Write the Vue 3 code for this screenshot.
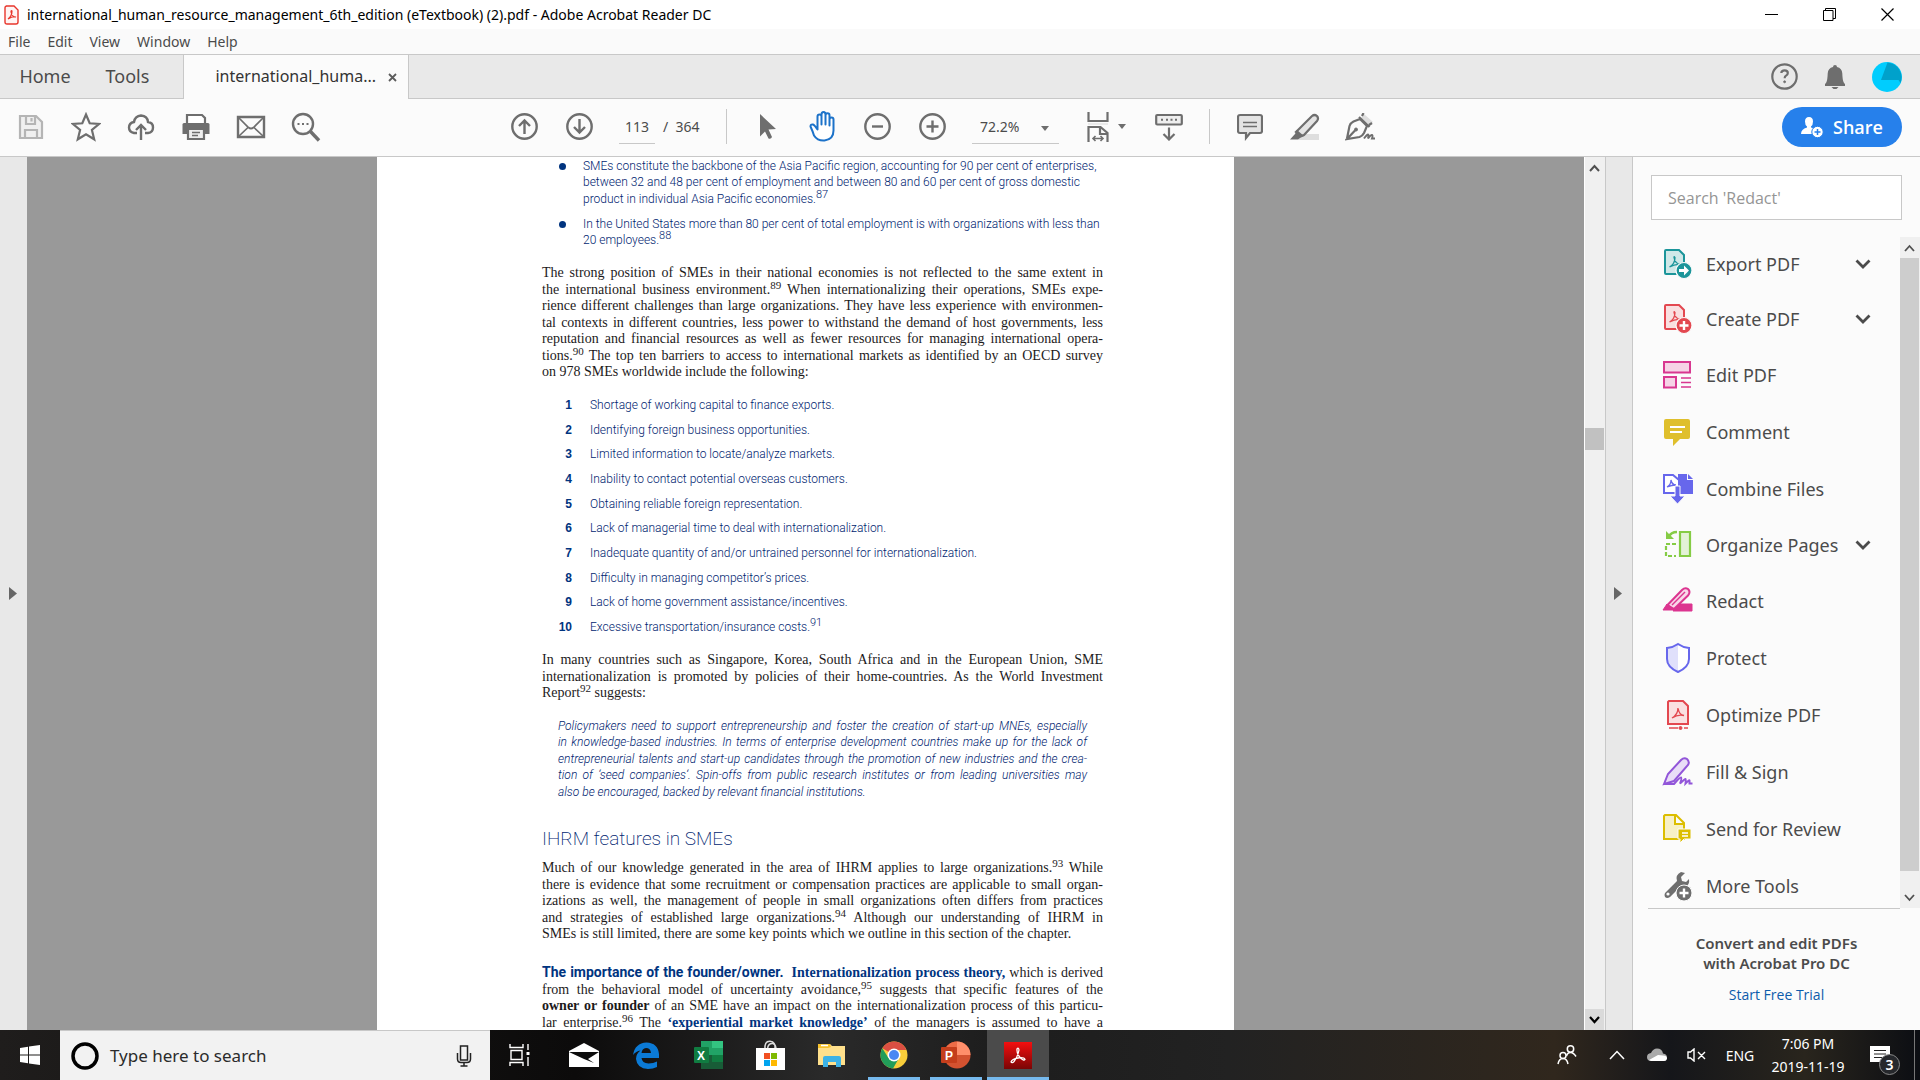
<script setup>
import { ref } from 'vue'

const page = ref('113')
const zoom = ref('72.2%')
const query = ref('')
const menus = ['File', 'Edit', 'View', 'Window', 'Help']
const tools = [
  { id: 'export', label: 'Export PDF', more: true },
  { id: 'create', label: 'Create PDF', more: true },
  { id: 'edit', label: 'Edit PDF' },
  { id: 'comment', label: 'Comment' },
  { id: 'combine', label: 'Combine Files' },
  { id: 'organize', label: 'Organize Pages', more: true },
  { id: 'redact', label: 'Redact' },
  { id: 'protect', label: 'Protect' },
  { id: 'optimize', label: 'Optimize PDF' },
  { id: 'sign', label: 'Fill & Sign' },
  { id: 'review', label: 'Send for Review' },
  { id: 'more', label: 'More Tools' }
]
const barriers = [
  'Shortage of working capital to finance exports.',
  'Identifying foreign business opportunities.',
  'Limited information to locate/analyze markets.',
  'Inability to contact potential overseas customers.',
  'Obtaining reliable foreign representation.',
  'Lack of managerial time to deal with internationalization.',
  'Inadequate quantity of and/or untrained personnel for internationalization.',
  'Difficulty in managing competitor’s prices.',
  'Lack of home government assistance/incentives.',
  'Excessive transportation/insurance costs.'
]
</script>

<template>
  <div class="screen">
    <header class="titlebar">
      <svg class="appicon" width="16" height="20" viewBox="0 0 16 20"><path d="M2 1h8l4 4v12q0 2-2 2H3q-2 0-2-2V3q0-2 2-2z" fill="#fff4f3" stroke="#e8362c" stroke-width="1.4" /><path d="M4 14q4-3 4-8q-1-1-1 1q1 5 5 5q-3-1-8 2z" fill="none" stroke="#e8362c" stroke-width="1.2" /></svg>
      <h1>international_human_resource_management_6th_edition (eTextbook) (2).pdf - Adobe Acrobat Reader DC</h1>
      <div class="winbtns">
        <button aria-label="Minimize"><svg width="13" height="13" viewBox="0 0 13 13"><path d="M0 6.500h13" stroke="#000" /></svg></button>
        <button aria-label="Restore"><svg width="13" height="13" viewBox="0 0 13 13" fill="none" stroke="#000"><path d="M.5 2.500h9.500v10H.5zM2.500 2.500v-2h10v10H10" /></svg></button>
        <button aria-label="Close"><svg width="13" height="13" viewBox="0 0 13 13"><path d="M.5.5l12 12M12.500.5l-12 12" stroke="#000" stroke-width="1.200" /></svg></button>
      </div>
    </header>

    <nav class="menubar">
      <button v-for="m in menus" :key="m">{{ m }}</button>
    </nav>

    <div class="tabs">
      <button class="tab">Home</button>
      <button class="tab">Tools</button>
      <div class="tab-active">
        <button class="tab-name">international_huma...</button>
        <button class="tab-close" aria-label="Close tab"><svg width="9" height="9" viewBox="0 0 9 9"><path d="M1 1l7 7M8 1l-7 7" stroke="#5c5c5c" stroke-width="1.800" /></svg></button>
      </div>
      <div class="account">
        <button aria-label="Help"><svg width="27" height="27" viewBox="0 0 27 27" fill="none" stroke="#6e6e6e"><circle cx="13.500" cy="13.500" r="12.200" stroke-width="2.200" /><path d="M10.300 10q.2-2.600 3.300-2.600 3.200 0 3.200 2.600 0 1.600-1.700 2.600-1.400.8-1.400 2.300v.4" stroke-width="2.200" /><circle cx="13.600" cy="18.800" r="1" fill="#6e6e6e" stroke-width=".8" /></svg></button>
        <button aria-label="Notifications"><svg width="22" height="26" viewBox="0 0 22 26" fill="#6e6e6e"><path d="M11 1q2 0 2 2q5 1 5.300 6.500q.2 6 1.200 8.500q.7 1.500 1.500 2v2H1v-2q.8-.5 1.500-2q1-2.500 1.200-8.500Q4 4 9 3q0-2 2-2zM7.500 23h7l-2 2h-3z" /></svg></button>
        <button aria-label="Account"><svg width="30" height="30" viewBox="0 0 30 30"><circle cx="15" cy="15" r="15" fill="#00cdfe" /><path d="M15.500.5A15 15 0 0 1 28.500 21l-2-3H9z" fill="#00a1cb" /></svg></button>
      </div>
    </div>

    <div class="toolbar">
      <div class="group">
        <button class="tb" aria-label="Save"><svg width="26" height="26" viewBox="0 0 26 26" fill="none" stroke="#b5b5b5" stroke-width="2.200"><path d="M2 2h16l6 6v16H2z" fill="#f0f0f0" /><path d="M8 2v8h9V2M13.500 4v3.500M7 24v-8h12v8" /></svg></button>
        <button class="tb" aria-label="Star"><svg width="30" height="30" viewBox="0 0 30 30"><path d="M15 2.500l3.700 8.800 9.300.7-7.100 6 2.300 9.300-8.200-5-8.200 5L9.100 18 2 12l9.300-.7z" fill="none" stroke="#6e6e6e" stroke-width="2.200" /></svg></button>
        <button class="tb" aria-label="Upload"><svg width="28" height="28" viewBox="0 0 28 28" fill="none" stroke="#6e6e6e" stroke-width="2.400"><path d="M10 20H7q-5-1-5-5.500T7 9q1-6 7-6.500Q20.500 3 21 9q5 .5 5 5.500T21 20h-3M14 27V12M9 17l5-5 5 5" /></svg></button>
        <button class="tb" aria-label="Print"><svg width="28" height="28" viewBox="0 0 28 28"><path d="M5 10V2h15l3 3v5" fill="#fff" stroke="#6e6e6e" stroke-width="2.200" /><path d="M2 10h24q1.500 0 1.500 1.500V21H.5v-9.500Q.5 10 2 10z" fill="#6e6e6e" /><path d="M6 16h16v10H6z" fill="#eee" stroke="#6e6e6e" stroke-width="2.200" /><path d="M10 19.500h8M10 22.500h6" stroke="#6e6e6e" stroke-width="1.300" /></svg></button>
        <button class="tb" aria-label="Email"><svg width="30" height="24" viewBox="0 0 30 24" fill="none" stroke="#6e6e6e"><path d="M2 2h26v20H2z" stroke-width="2.400" /><path d="M3 3l9.500 9.500q2.500 2 5 0L27 3M3 21l9-8.500M27 21l-9-8.500" stroke-width="1.700" /></svg></button>
        <button class="tb" aria-label="Find"><svg width="30" height="30" viewBox="0 0 30 30" fill="none" stroke="#6e6e6e"><circle cx="12" cy="12" r="10" stroke-width="2.400" /><path d="M19.500 19.500l8.500 9" stroke-width="3.400" /><path d="M6.500 12h2M11 12h2M15.500 12h2" stroke-width="2" /></svg></button>
      </div>
      <span class="sp-left"></span>
      <div class="group">
        <button class="tb" aria-label="Previous page"><svg width="27" height="27" viewBox="0 0 27 27" fill="none" stroke="#6e6e6e" stroke-width="2.400"><circle cx="13.500" cy="13.500" r="12.200" /><path d="M13.500 21V8M8 13l5.500-5.500L19 13" /></svg></button>
        <button class="tb" aria-label="Next page"><svg width="27" height="27" viewBox="0 0 27 27" fill="none" stroke="#6e6e6e" stroke-width="2.400"><circle cx="13.500" cy="13.500" r="12.200" /><path d="M13.500 6v13M8 14l5.500 5.500L19 14" /></svg></button>
        <input class="pageno" v-model="page" aria-label="Page number">
        <span class="total">/&nbsp; 364</span>
        <span class="divider"></span>
        <button class="tb" aria-label="Select"><svg width="18" height="28" viewBox="0 0 18 28"><path d="M1 1l16 15-7.500.6L13 24q-1 2.500-3.500 1.500L6 18.500 1 23.500z" fill="#6e6e6e" /></svg></button>
        <button class="tb" aria-label="Pan"><svg width="30" height="31" viewBox="0 0 30 31"><path d="M8.500 18V6q0-2 2-2t2 2v8V4q0-2.500 2-2.500t2 2.500v10V5q0-2.300 2-2.300t2 2.300v10V9q0-2 2-2t2 2v11q0 9-9 10-7 .500-10.500-5Q4 21.500 1.500 16q0-2.500 2.500-2 1.500.500 4.500 5z" transform="translate(1 -.5)" fill="#fff" stroke="#1c72c9" stroke-width="2" stroke-linejoin="round" /></svg></button>
        <button class="tb" aria-label="Zoom out"><svg width="27" height="27" viewBox="0 0 27 27" fill="none" stroke="#6e6e6e" stroke-width="2.400"><circle cx="13.500" cy="13.500" r="12.200" /><path d="M8 13.500h11" /></svg></button>
        <button class="tb" aria-label="Zoom in"><svg width="27" height="27" viewBox="0 0 27 27" fill="none" stroke="#6e6e6e" stroke-width="2.400"><circle cx="13.500" cy="13.500" r="12.200" /><path d="M7.500 13.500h12M13.500 7.500v12" /></svg></button>
        <span class="zoombox">
          <select v-model="zoom" aria-label="Zoom level"><option>72.2%</option><option>100%</option></select>
          <svg class="caret" width="8" height="5" viewBox="0 0 8 5"><path d="M0 0h8L4 5z" fill="#6e6e6e" /></svg>
        </span>
        <button class="fit" aria-label="Fit width"><svg width="22" height="30" viewBox="0 0 22 30" fill="none" stroke="#6e6e6e" stroke-width="2.200"><path d="M1.500 0v9h19V0" /><path d="M1 12h20" stroke="#e4e4e4" stroke-width="1.500" /><path d="M1.500 30V15h12l7 6v9M13 15v7h7" /><path d="M6 26.500h10M8.500 24L6 26.500 8.500 29M13.500 24l2.500 2.500-2.500 2.500" stroke-width="1.600" /></svg><svg width="8" height="5" viewBox="0 0 8 5"><path d="M0 0h8L4 5z" fill="#6e6e6e" /></svg></button>
        <button class="tb" aria-label="Toolbar dock"><svg width="28" height="28" viewBox="0 0 28 28" fill="none" stroke="#6e6e6e" stroke-width="2.200"><rect x="1.200" y="2" width="25.600" height="9.500" rx="1" fill="#eee" /><path d="M6 6.700h2M11 6.700h2M15.500 6.700h2M20 6.700h2" stroke-width="2" /><path d="M14 14.500V26M8.500 21l5.500 5.500 5.500-5.500" /></svg></button>
        <span class="divider"></span>
        <button class="tb" aria-label="Comment"><svg width="26" height="28" viewBox="0 0 26 28"><path d="M3 2h20q2 0 2 2v14q0 2-2 2H13l-4 5v-5H3q-2 0-2-2V4q0-2 2-2z" fill="#e4e4e4" stroke="#6e6e6e" stroke-width="2.200" /><path d="M6 9.500h14M6 13.500h14" stroke="#6e6e6e" stroke-width="1.500" /></svg></button>
        <button class="tb" aria-label="Highlight"><svg width="30" height="28" viewBox="0 0 30 28"><path d="M11 21h18v6H8z" fill="#dedede" /><path d="M8 17L22 3q2.500-2 5 0 2 2.500 0 5L14 22l-3 1-5-4z" fill="#e4e4e4" stroke="#6e6e6e" stroke-width="2.200" /><path d="M7 17l7 6-4 2-5-4zM5 21l5 4-2 1.500H0z" fill="#6e6e6e" /></svg></button>
        <button class="tb" aria-label="Sign"><svg width="30" height="28" viewBox="0 0 30 28" fill="none" stroke="#6e6e6e"><path d="M16 5l3-4 9 8-4 3z" fill="#dedede" stroke="none" /><path d="M2 25.500L4.500 13q1-3 4-4.500L15 6l7 7-3 7q-1.500 3-4.500 4L2 26l8-8.500M14 4l10.500 10M17 3l1.500-3M24 12l3-2" stroke-width="2.200" /><circle cx="11" cy="16.500" r="1.500" fill="#6e6e6e" /><path d="M19 25.500q3-4 4-4t0 4q3-4 4-3.500t0 3.500h3" stroke-width="2" /></svg></button>
      </div>
      <span class="sp-right"></span>
      <button class="share"><svg width="23" height="22" viewBox="0 0 23 22"><path d="M8 1q4 0 4 4.500Q12 9 10 10.500v1q4 1 4.500 2.500L12 18H0q0-5 6-6.500v-1Q4 9 4 5.500 4 1 8 1z" fill="#fff" /><circle cx="16.500" cy="16" r="5.700" fill="#fff" stroke="#2680eb" /><path d="M13.500 16h6M16.500 13v6" stroke="#2680eb" stroke-width="1.500" /></svg>Share</button>
    </div>

    <main class="work">
      <button class="strip left" aria-label="Open navigation pane"><svg width="8" height="13" viewBox="0 0 8 13"><path d="M0 0l8 6.500L0 13z" fill="#666" /></svg></button>
      <section class="canvas">
        <article class="page">
          <ul class="bullets">
            <li><span class="ln">SMEs constitute the backbone of the Asia Pacific region, accounting for 90 per cent of enterprises,</span><span class="ln">between 32 and 48 per cent of employment and between 80 and 60 per cent of gross domestic</span><span class="ln">product in individual Asia Pacific economies.<sup>87</sup></span></li>
            <li><span class="ln">In the United States more than 80 per cent of total employment is with organizations with less than</span><span class="ln">20 employees.<sup>88</sup></span></li>
          </ul>
          <p class="body first">
            <span class="ln">The strong position of SMEs in their national economies is not reflected to the same extent in</span>
            <span class="ln">the international business environment.<sup>89</sup> When internationalizing their operations, SMEs expe-</span>
            <span class="ln">rience different challenges than large organizations. They have less experience with environmen-</span>
            <span class="ln">tal contexts in different countries, less power to withstand the demand of host governments, less</span>
            <span class="ln">reputation and financial resources as well as fewer resources for managing international opera-</span>
            <span class="ln">tions.<sup>90</sup> The top ten barriers to access to international markets as identified by an OECD survey</span>
            <span class="ln end">on 978 SMEs worldwide include the following:</span>
          </p>
          <ol class="barriers">
            <li v-for="(b, i) in barriers" :key="b"><b>{{ i + 1 }}</b><span>{{ b }}<sup v-if="i === 9">91</sup></span></li>
          </ol>
          <p class="body many">
            <span class="ln">In many countries such as Singapore, Korea, South Africa and in the European Union, SME</span>
            <span class="ln">internationalization is promoted by policies of their home-countries. As the World Investment</span>
            <span class="ln end">Report<sup>92</sup> suggests:</span>
          </p>
          <blockquote>
            <span class="ln">Policymakers need to support entrepreneurship and foster the creation of start-up MNEs, especially</span>
            <span class="ln">in knowledge-based industries. In terms of enterprise development countries make up for the lack of</span>
            <span class="ln">entrepreneurial talents and start-up candidates through the promotion of new industries and the crea-</span>
            <span class="ln">tion of ‘seed companies‘. Spin-offs from public research institutes or from leading universities may</span>
            <span class="ln end">also be encouraged, backed by relevant financial institutions.</span>
          </blockquote>
          <h2>IHRM features in SMEs</h2>
          <p class="body">
            <span class="ln">Much of our knowledge generated in the area of IHRM applies to large organizations.<sup>93</sup> While</span>
            <span class="ln">there is evidence that some recruitment or compensation practices are applicable to small organ-</span>
            <span class="ln">izations as well, the management of people in small organizations often differs from practices</span>
            <span class="ln">and strategies of established large organizations.<sup>94</sup> Although our understanding of IHRM in</span>
            <span class="ln end">SMEs is still limited, there are some key points which we outline in this section of the chapter.</span>
          </p>
          <p class="body founder">
            <span class="ln"><b class="runin">The importance of the founder/owner.</b>&nbsp; <b class="term">Internationalization process theory,</b> which is derived</span>
            <span class="ln">from the behavioral model of uncertainty avoidance,<sup>95</sup> suggests that specific features of the</span>
            <span class="ln"><b>owner or founder</b> of an SME have an impact on the internationalization process of this particu-</span>
            <span class="ln">lar enterprise.<sup>96</sup> The <b class="term">‘experiential market knowledge’</b> of the managers is assumed to have a</span>
          </p>
        </article>
      </section>
      <div class="scroll">
        <button class="sb" aria-label="Scroll up"><svg width="11" height="8" viewBox="0 0 11 8"><path d="M1 7l4.500-5L10 7" fill="none" stroke="#505050" stroke-width="2" /></svg></button>
        <span class="thumb"></span>
        <button class="sb down" aria-label="Scroll down"><svg width="11" height="8" viewBox="0 0 11 8"><path d="M1 1l4.500 5L10 1" fill="none" stroke="#000" stroke-width="2.200" /></svg></button>
      </div>
      <button class="strip right" aria-label="Collapse tools pane"><svg width="8" height="13" viewBox="0 0 8 13"><path d="M0 0l8 6.500L0 13z" fill="#666" /></svg></button>

      <aside class="panel">
        <input class="search" v-model="query" placeholder="Search 'Redact'" aria-label="Search tools">
        <div class="toolwrap">
          <div class="toollist">
            <button v-for="t in tools" :key="t.id" class="tool" :class="{ more: t.more }">
              <svg width="32" height="32" viewBox="0 0 32 32" fill="none">
                <g v-if="t.id === 'export' || t.id === 'create'" :stroke="t.id === 'export' ? '#1b959a' : '#e34850'">
                  <path d="M4 2h13l5 5v19H4q-1 0-1-1V3q0-1 1-1z" :fill="t.id === 'export' ? '#cfe8e8' : '#f9dfe0'" stroke-width="2" />
                  <path d="M7.500 19q5.500-3 5.500-9.500-1-1.500-1 0 1 6.500 7 7-5.500-1-11.500 2.500z" stroke-width="1.300" />
                  <circle cx="22" cy="22.500" r="8" :fill="t.id === 'export' ? '#1b959a' : '#e34850'" stroke="#fbfbfb" stroke-width="1.200" />
                  <path v-if="t.id === 'export'" d="M17 21h5v-3.500l5 5-5 5V24h-5z" fill="#fff" stroke="none" />
                  <path v-else d="M17.500 22.500h9M22 18v9" stroke="#fff" stroke-width="2.400" />
                </g>
                <g v-else-if="t.id === 'edit'" stroke="#d83790" stroke-width="2"><path d="M2 3h26v10.500H2zM2 18h12v10.500H2z" fill="#f6d3e6" /><path d="M19 19h10M19 23.500h10M19 28h10" stroke-width="1.500" /></g>
                <g v-else-if="t.id === 'comment'"><path d="M4 3h22q2 0 2 2v16q0 2-2 2h-8l-7 7v-7H4q-2 0-2-2V5q0-2 2-2z" fill="#dfbf2c" /><path d="M8 11h15M8 16h12" stroke="#fff" stroke-width="2" /></g>
                <g v-else-if="t.id === 'combine'"><path d="M16 1h9v6h6v14H16z" fill="#6767ec" /><path d="M26 1l5 5h-5z" fill="#6767ec" /><path d="M2 2h9l6 5v13H2z" fill="#fff" stroke="#6767ec" stroke-width="2" /><path d="M5 14q4-2 4-7 1 5 5 5-4 0-9 2z" stroke="#6767ec" stroke-width="1.300" /><path d="M13 13h5v10h5l-7.500 8L8 23h5z" fill="#6767ec" stroke="#fbfbfb" /></g>
                <g v-else-if="t.id === 'organize'" stroke="#85cc45" stroke-width="2.200"><path d="M18 3h10v24H18z" fill="#e3f2d6" /><path d="M14 15H4v12h10" stroke-dasharray="4 2" /><path d="M15 3q-6 0-8.500 5" stroke-width="2.600" /><path d="M4 2v8h8z" fill="#85cc45" stroke="none" /></g>
                <g v-else-if="t.id === 'redact'" stroke="#dc3590"><path d="M17 19h13v7H11z" fill="#dc3590" /><path d="M5.500 20L20 5q3-3 6-1 3 3 0 6.500L12 24z" fill="#f9d7e9" stroke-width="2" /><path d="M10 20L23 7" stroke-width="1.500" /><path d="M5 19l7 6H1z" fill="#dc3590" /></g>
                <g v-else-if="t.id === 'protect'"><path d="M16 2Q11 5.500 5 6v11q0 8 11 13 11-5 11-13V6q-6-.5-11-4z" fill="#fff" /><path d="M16 2Q11 5.500 5 6v11q0 8 11 13z" fill="#e0e0fb" /><path d="M16 2Q11 5.500 5 6v11q0 8 11 13 11-5 11-13V6q-6-.5-11-4z" stroke="#6767ec" stroke-width="2" /></g>
                <g v-else-if="t.id === 'optimize'" stroke="#e34850"><path d="M7 2h14l5 5v18H6V3z" fill="#fae0e1" stroke-width="2" /><path d="M10 19q6-3.500 6-10 1 7 6 7.500-6-1.500-12 2.500z" stroke-width="1.400" /><path d="M7 29h9M22 29h4" stroke-width="1.500" /><circle cx="18.500" cy="29" r="1.500" fill="#e34850" /></g>
                <g v-else-if="t.id === 'sign'" stroke="#9256d9" stroke-width="2"><path d="M2 28L6 18 19 4q3-3 6-1 3 3 1 6L12 25z" fill="#e9ddf7" /><path d="M2 28h10q6-7 7-6.500t-1 6q5-5 5.500-4.500t0 4.500q4-4 4-3t0 3h3" /></g>
                <g v-else-if="t.id === 'review'" stroke="#dcbe00" stroke-width="2"><path d="M3 2h11l8 8v16H2V3zM13 2v9h9" fill="#f7f0c6" /><path d="M17 16h12v10h-7l-4 4v-4h-2V16z" fill="#dcbe00" stroke="#fbfbfb" stroke-width="1" /><path d="M20 20h6M20 23h6" stroke="#fff" stroke-width="1.300" /></g>
                <g v-else><path d="M3 23L15 11Q13 5 19 2l4 1-4 4 1 4 4 1 3-3q1 6-4 8-3 1-5 0L8 27q-3 2-5 0-1-2 0-4z" fill="#6e6e6e" /><circle cx="6" cy="24" r="1.600" fill="#fbfbfb" /><circle cx="22" cy="23" r="8" fill="#6e6e6e" stroke="#fbfbfb" /><path d="M17.500 23h9M22 18.500v9" stroke="#fff" stroke-width="2.400" /></g>
              </svg>
              <span>{{ t.label }}</span>
              <svg v-if="t.more" class="chev" width="16" height="10" viewBox="0 0 16 10"><path d="M1.500 1.500L8 8l6.500-6.500" fill="none" stroke="#4b4b4b" stroke-width="2.800" /></svg>
            </button>
          </div>
          <div class="toolscroll">
            <button class="sb" aria-label="Scroll tools up"><svg width="11" height="8" viewBox="0 0 11 8"><path d="M1 7l4.500-5L10 7" fill="none" stroke="#505050" stroke-width="1.800" /></svg></button>
            <span class="toolthumb"></span>
            <button class="sb" aria-label="Scroll tools down"><svg width="11" height="8" viewBox="0 0 11 8"><path d="M1 1l4.500 5L10 1" fill="none" stroke="#505050" stroke-width="1.800" /></svg></button>
          </div>
        </div>
        <div class="promo">
          <strong>Convert and edit PDFs<br>with Acrobat Pro DC</strong>
          <a href="#">Start Free Trial</a>
        </div>
      </aside>
    </main>

    <footer class="taskbar">
      <button class="start" aria-label="Start"><svg width="20" height="20" viewBox="0 0 20 20" fill="#fff"><path d="M0 3l8-1.200v7.700H0zM9 1.600L20 0v9.500H9zM0 10.500h8v7.700L0 17zM9 10.500h11V20L9 18.400z" /></svg></button>
      <button class="cortana"><svg width="30" height="30" viewBox="0 0 30 30"><circle cx="15" cy="15" r="12" fill="none" stroke="#000" stroke-width="3.500" /></svg><span>Type here to search</span><svg width="16" height="22" viewBox="0 0 16 22" fill="none" stroke="#222" stroke-width="1.500"><rect x="4.500" y="1" width="7" height="14" /><path d="M1.500 8v6q0 3.500 3.500 3.500h6q3.500 0 3.500-3.500V8M8 18v3M4.500 21h7" /></svg></button>
      <div class="apps">
        <button class="app view" aria-label="Task View"><svg width="22" height="22" viewBox="0 0 22 22" fill="none" stroke="#fff" stroke-width="1.400"><path d="M1 0v3.500h13V0M1 22v-3.500h13V22M2 6.500h11v9H2zM19 0v6M19 13v9" /><path d="M17.500 8h3v3h-3z" fill="#fff" stroke="none" /></svg></button>
        <button class="app" aria-label="Mail"><svg width="30" height="26" viewBox="0 0 30 26"><path d="M0 9L15 1l15 8v16H0z" fill="#fff" /><path d="M0 10h30L19 17l6 4-10-4z" fill="#0c0c0c" /></svg></button>
        <button class="app" aria-label="Edge"><svg width="26" height="27" viewBox="0 0 26 27"><path d="M0 13Q2 1 13.500.5 25 1 26 12v4H8.500q.5 5 7 5.500 5 0 8.500-2v5.500Q20 27 15 27 4 26.500 3 17q0-5.500 4.500-8.500Q3 9 0 13zM8.500 11H18q-.500-5-5-5-4 .5-4.500 5z" fill="#0b7ad6" /></svg></button>
        <button class="app" aria-label="Excel"><svg width="29" height="28" viewBox="0 0 29 28"><path d="M7 0h22v28H7z" fill="#185c37" /><path d="M7 0h11v14H7z" fill="#21a366" /><path d="M18 0h11v7H18z" fill="#33c481" /><path d="M18 7h11v7H18z" fill="#21a366" /><path d="M18 14h11v7H18z" fill="#107c41" /><rect y="6" width="15" height="16" rx="1" fill="#107c41" /><text x="3" y="18.500" font-size="12" font-weight="700" fill="#fff">X</text></svg></button>
        <button class="app" aria-label="Store"><svg width="30" height="30" viewBox="0 0 30 30"><path d="M10 10Q9 1 15 1.200T20 10M12.500 9Q13 3 18 3.500q3 1 3 6" fill="none" stroke="#ddd" stroke-width="1.500" /><path d="M1 8h29v22H1z" fill="#fff" /><path d="M9 13h6v6H9z" fill="#f25022" /><path d="M16 13h6v6h-6z" fill="#7fba00" /><path d="M9 20h6v6H9z" fill="#00a4ef" /><path d="M16 20h6v6h-6z" fill="#ffb900" /></svg></button>
        <button class="app" aria-label="File Explorer"><svg width="28" height="24" viewBox="0 0 28 24"><path d="M0 1h12l2 2h13v19H0z" fill="#ffe08c" /><path d="M0 1h12l1 3-3 1H0z" fill="#f6c12c" /><path d="M3 2.500h7" stroke="#fff" stroke-width="1.500" /><path d="M5 24V15q0-2 2-2h14q2 0 2 2v9h-5v-5h-8v5z" fill="#3db2e6" /></svg></button>
        <button class="app run" aria-label="Chrome"><svg width="28" height="28" viewBox="0 0 28 28"><circle cx="14" cy="14" r="13.500" fill="#f8cd3a" /><path d="M14 14L2.300 7.200A13.500 13.500 0 0 1 25.700 7.200L26 9H14z" fill="#db4f42" /><path d="M2.300 7.200A13.500 13.500 0 0 0 13 27.500L19 17 8.500 17z" fill="#229d59" /><circle cx="14" cy="14" r="6.500" fill="#fff" /><circle cx="14" cy="14" r="5" fill="#4a88f3" /></svg></button>
        <button class="app run" aria-label="PowerPoint"><svg width="30" height="28" viewBox="0 0 30 28"><circle cx="16" cy="14" r="13.500" fill="#d35230" /><path d="M16 .5A13.500 13.500 0 0 1 29.500 14H16z" fill="#ff8f6b" /><path d="M16 .5A13.500 13.500 0 0 0 2.500 14H16z" fill="#ed6c47" /><rect y="6" width="16" height="16" rx="1" fill="#c43e1c" /><text x="4" y="18.500" font-size="12" font-weight="700" fill="#fff">P</text></svg></button>
        <button class="app active" aria-label="Acrobat Reader"><svg width="28" height="27" viewBox="0 0 28 27"><defs><linearGradient id="ar" x2="0" y2="1"><stop stop-color="#f40f0f" /><stop offset="1" stop-color="#7a0505" /></linearGradient></defs><path d="M0 0h28v27H0z" fill="url(#ar)" /><path d="M7 20Q8 17 14 16t7 1.500q-1 1.500-4-1Q12.500 12 13 7q1.500-2 2 1-1 6-5 11.500-2 2-3 .5z" fill="none" stroke="#fff" stroke-width="1.300" /></svg></button>
      </div>
      <div class="tray">
        <button class="people" aria-label="People"><svg width="20" height="20" viewBox="0 0 20 20" fill="none" stroke="#fff" stroke-width="1.500"><circle cx="13.500" cy="4" r="3.200" /><circle cx="6" cy="10.500" r="3" /><path d="M9.500 11q1-3.500 4-3.500t5.500 4M1 19q1-5.500 5-5.500t5 5.500" /></svg></button>
        <button class="up" aria-label="Hidden icons"><svg width="16" height="10" viewBox="0 0 16 10"><path d="M1 9l7-7.500L15 9" fill="none" stroke="#fff" stroke-width="1.500" /></svg></button>
        <button class="cloud" aria-label="OneDrive"><svg width="20" height="14" viewBox="0 0 20 14"><path d="M4 13q-4 0-4-4 0-3.500 4-4Q6 .5 10 .5q5 0 6 5 4 .5 4 4t-4 3.500z" fill="#aaa" /><path d="M2 12l9-5q3 0 5 .5 4 0 4 3-.5 2.500-3 2.500H4z" fill="#fff" /></svg></button>
        <button class="vol" aria-label="Volume"><svg width="19" height="14" viewBox="0 0 19 14" fill="none" stroke="#fff" stroke-width="1.400"><path d="M1 4h2.500L7 1v12l-3.500-3H1zM11 4l7 7M18 4l-7 7" /></svg></button>
        <button class="lang">ENG</button>
        <button class="clock"><span>7:06 PM</span><span>2019-11-19</span></button>
        <button class="note" aria-label="Notifications, 3 new"><svg width="20" height="19" viewBox="0 0 20 19"><path d="M0 0h20v16h-6l-4 3v-3H0z" fill="#fff" /><path d="M4 4.500h12M4 8h12M4 11.500h8" stroke="#222" /></svg><span class="badge">3</span></button>
      </div>
    </footer>
  </div>
</template>

<style>
body { margin: 0; background: #fbfbfb; }
</style>

<style scoped>
* { box-sizing: border-box; }
.screen { height: 100vh; display: flex; flex-direction: column; overflow: hidden; font-family: "Noto Sans", "Open Sans", sans-serif; font-size: 14px; color: #4b4b4b; }
button { margin: 0; padding: 0; border: 0; background: none; font: inherit; color: inherit; display: flex; align-items: center; justify-content: center; flex-shrink: 0; }
svg { display: block; flex-shrink: 0; }

.titlebar { height: 29px; flex-shrink: 0; display: flex; align-items: center; background: #fff; padding: 0 4px; }
.titlebar h1 { margin: 0 0 0 7px; font-size: 14px; font-weight: 400; color: #000; flex: 1; white-space: nowrap; }
.winbtns { display: flex; }
.winbtns button { width: 58px; height: 29px; }

.menubar { height: 26px; flex-shrink: 0; display: flex; gap: 17px; padding: 0 8px; background: #fafafa; border-bottom: 1px solid #c8c8c8; }

.tabs { height: 44px; flex-shrink: 0; display: flex; background: #e9e9e9; font-size: 18px; }
.tabs > .tab, .account { border-bottom: 1px solid #c8c8c8; }
.tabs > .tab, .tab-name { padding-bottom: 2px; }
.tab { width: 90px; }
.tab + .tab { width: 93px; padding-right: 18px; }
.tab-active { width: 226px; display: flex; align-items: center; justify-content: flex-end; background: #fbfbfb; border: solid #c8c8c8; border-width: 0 1px; padding-right: 11px; gap: 12px; font-size: 16px; color: #333; }
.account { flex: 1; display: flex; align-items: center; justify-content: flex-end; gap: 26px; padding-right: 18px; }

.toolbar { height: 58px; flex-shrink: 0; display: flex; align-items: center; background: #fbfbfb; border-bottom: 1px solid #c8c8c8; padding: 0 18px 2px 3px; }
.group { display: flex; align-items: center; }
.tb { width: 55px; height: 40px; }
.sp-left { flex: 164; }
.sp-right { flex: 395; }
.pageno { width: 36px; height: 34px; margin-left: 12px; padding: 0; border: 0; border-bottom: 1px solid #c8c8c8; background: none; text-align: center; font: inherit; color: inherit; }
.total { margin-left: 8px; width: 43px; }
.divider { width: 1px; height: 35px; margin: 0 13px 0 20px; background: #c8c8c8; }
.tb + .divider { margin: 0 12px 0 13px; }
.zoombox { position: relative; width: 87px; height: 34px; margin-left: 12px; border-bottom: 1px solid #c8c8c8; }
.zoombox select { appearance: none; width: 100%; height: 100%; padding: 0 8px; border: 0; background: none; font: inherit; color: inherit; }
.caret { position: absolute; right: 10px; top: 16px; pointer-events: none; }
.fit { gap: 9px; width: 43px; margin: 0 13px 0 26px; }
.share { width: 120px; height: 40px; border-radius: 20px; background: #2680eb; color: #fff; font-family: "Open Sans", sans-serif; font-size: 18px; font-weight: 600; gap: 9px; }

.work { flex: 1; min-height: 0; display: flex; overflow: hidden; }
.strip { width: 27px; background: #e8e8e8; padding-right: 2px; }
.strip.right { border-right: 1px solid #c8c8c8; }
.canvas { flex: 1; display: flex; justify-content: center; background: #999; overflow: hidden; }
.page { width: 857px; flex-shrink: 0; background: #fff; padding: 1px 131px 0 165px; font: 14px/16px "Liberation Serif", serif; color: #1d1a1b; overflow: hidden; }
.page p, .page ul, .page ol, .page blockquote { margin: 0; padding: 0; list-style: none; }
.ln { display: block; white-space: nowrap; text-align: justify; text-align-last: justify; line-height: 16px; }
.ln:nth-child(even) { line-height: 17px; }
.ln.end { text-align-last: left; }
sup { font-size: 11px; line-height: 0; vertical-align: 5px; }
.bullets, .barriers, blockquote { font-family: Roboto, "Liberation Sans", sans-serif; font-weight: 300; font-size: 12px; color: #00246f; }
.bullets li { position: relative; padding-left: 41px; margin-bottom: 9px; }
.bullets .ln { text-align-last: left; }
.bullets li::before { content: ""; position: absolute; left: 17px; top: 5px; width: 7px; height: 7px; border-radius: 50%; background: #00347f; }
.page .body.first { margin-top: 16px; }
.page .barriers { margin-top: 13px; }
.barriers li { display: flex; line-height: 25px; height: 25px; }
.barriers li:nth-child(3n + 2) { height: 24px; }
.barriers b { width: 30px; margin-right: 18px; text-align: right; font-family: "Liberation Sans", sans-serif; font-weight: 700; color: #00347f; }
.page .body.many { margin-top: 12px; }
.page blockquote { margin: 17px 16px 0; font-style: italic; }
h2 { margin: 26px 0 8px; font: 200 19px/26px Roboto, sans-serif; color: #00246f; }
.page .body.founder { margin-top: 22px; }
.runin { font-family: Roboto, "Liberation Sans", sans-serif; color: #00347f; }
.term { color: #00347f; }

.scroll { width: 22px; display: flex; flex-direction: column; background: #f0f0f0; border: solid #c8c8c8; border-width: 0 1px 0 0; border-left: 1px solid #fff; }
.sb { width: 19px; height: 21px; }
.thumb { height: 22px; width: 19px; margin-top: 250px; background: #c1c1c1; }
.sb.down { margin-top: auto; background: #dadada; }

.panel { width: 287px; flex-shrink: 0; background: #fbfbfb; display: flex; flex-direction: column; }
.search { height: 45px; flex-shrink: 0; margin: 18px 18px 16px; padding: 0 16px; border: 1px solid #c8c8c8; background: #fff; font: inherit; font-family: "Open Sans", sans-serif; font-size: 16px; color: #4b4b4b; }
.search::placeholder { color: #959595; opacity: 1; }
.toolwrap { display: flex; margin-left: 15px; height: 673px; }
.toollist { flex: 1; border-bottom: 1px solid #c8c8c8; overflow: hidden; }
.tool { width: 100%; height: 57px; justify-content: flex-start; padding: 0 29px 0 14px; font-size: 18px; }
.tool.more { height: 55px; }
.tool span { margin-left: 12px; white-space: nowrap; }
.chev { margin-left: auto; }
.toolscroll { width: 20px; margin: 1px 0; display: flex; flex-direction: column; background: #f0f0f0; }
.toolthumb { width: 19px; height: 613px; background: #cdcdcd; }
.toolscroll .sb:last-child { margin-top: auto; }
.promo { padding: 24px 0 0; text-align: center; font-size: 14px; }
.promo strong { display: block; font-size: 15px; line-height: 20px; font-weight: 600; }
.promo a { display: inline-block; margin-top: 12px; line-height: 20px; font-family: "Open Sans", sans-serif; color: #0d5cab; text-decoration: none; }

.taskbar { height: 50px; flex-shrink: 0; display: flex; background: linear-gradient(90deg, #1f1d1c 0, #0c0b0b 30%, #2a2a2a 43%, #1d1d1d 52%, #222 64%, #30271d 81%, #15161a 87%, #29251d 94%, #0c0e13 100%); color: #fff; }
.start { width: 60px; }
.cortana { width: 430px; background: #f2f2f2; border-top: 1px solid #c8c8c8; color: #2b2b2b; font-size: 17px; padding: 0 18px 0 10px; }
.cortana span { flex: 1; text-align: left; margin-left: 10px; }
.apps { display: flex; }
.app { width: 62px; font-family: "Liberation Sans", sans-serif; position: relative; }
.app.view { width: 60px; margin-right: 3px; }
.app.active { background: #4b4b4b; }
.app.run::after, .app.active::after { content: ""; position: absolute; bottom: 0; left: 5px; right: 5px; height: 3px; background: #76b9ed; }
.app.active::after { left: 0; right: 0; }
.tray { margin-left: auto; display: flex; padding-right: 5px; font-size: 14px; }
.people { width: 40px; }
.up { width: 60px; }
.cloud { width: 20px; }
.vol { width: 58px; }
.lang { width: 30px; }
.clock { width: 106px; flex-direction: column; }
.clock span { line-height: 23px; }
.note { position: relative; border-right: 1px solid #777; width: 54px; padding-right: 16px; }
.badge { position: absolute; left: 18px; top: 24px; width: 21px; height: 21px; border: 1px solid #888; border-radius: 50%; background: #26282c; font-size: 14px; font-weight: 600; line-height: 19px; }
</style>
